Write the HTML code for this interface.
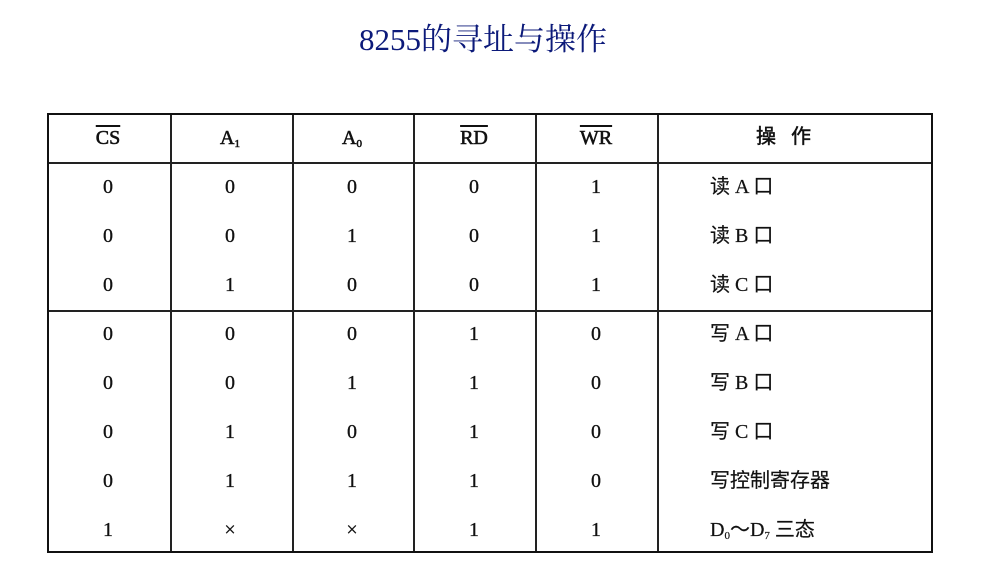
<!DOCTYPE html>
<html><head><meta charset="utf-8"><style>
body{margin:0;width:1004px;height:580px;background:#fff;position:relative;overflow:hidden;font-family:"Liberation Serif","Noto Serif CJK SC",serif;color:#111}
.t{position:absolute;left:0;width:966px;top:14px;text-align:center;font-size:31px;color:#0c1a7a;font-family:"Liberation Serif","Noto Serif CJK SC",serif}
.tb{position:absolute;left:47px;top:113px;width:886px;height:440px;border:2px solid #111;box-sizing:border-box}
.v{position:absolute;top:0;bottom:0;width:1.5px;background:#222}
.h{position:absolute;left:0;right:0;height:1.5px;background:#222}
.c{position:absolute;font-size:20px;text-align:center;width:120px;line-height:20px;-webkit-text-stroke:0.3px #111}
.o{position:absolute;left:662px;font-size:20px;line-height:20px;font-family:"Liberation Serif","Noto Sans CJK SC",serif;-webkit-text-stroke:0.2px #111}
.ov{text-decoration:overline}
sub{font-size:11px;vertical-align:-3px}
</style></head><body>
<div class="t">8255的寻址与操作</div>
<div class="tb">
<div class="v" style="left:121px"></div>
<div class="v" style="left:243px"></div>
<div class="v" style="left:364px"></div>
<div class="v" style="left:486px"></div>
<div class="v" style="left:608px"></div>
<div class="h" style="top:47px"></div>
<div class="h" style="top:195px"></div>
</div>
<div id="cells"></div>
<script>
var cx=[108,230,352,474,596];
var rows=[["0","0","0","0","1","读 A 口"],["0","0","1","0","1","读 B 口"],["0","1","0","0","1","读 C 口"],["0","0","0","1","0","写 A 口"],["0","0","1","1","0","写 B 口"],["0","1","0","1","0","写 C 口"],["0","1","1","1","0","写控制寄存器"],["1","×","×","1","1","D<sub>0</sub>～D<sub>7</sub> 三态"]];
var hd=['<span class="ov">CS</span>','A<sub>1</sub>','A<sub>0</sub>','<span class="ov">RD</span>','<span class="ov">WR</span>'];
var s='';
hd.forEach(function(t,i){s+='<div class="c" style="left:'+(cx[i]-60)+'px;top:128px;-webkit-text-stroke:0.6px #111">'+t+'</div>'});
s+='<div class="o" style="left:756px;top:127px;-webkit-text-stroke:0.5px #111">操&nbsp;&nbsp;&nbsp;作</div>';
rows.forEach(function(r,j){var y=177+j*49;for(var i=0;i<5;i++)s+='<div class="c" style="left:'+(cx[i]-60)+'px;top:'+y+'px">'+r[i]+'</div>';s+='<div class="o" style="left:710px;top:'+y+'px">'+r[5]+'</div>'});
document.getElementById('cells').innerHTML=s;
</script>
</body></html>
